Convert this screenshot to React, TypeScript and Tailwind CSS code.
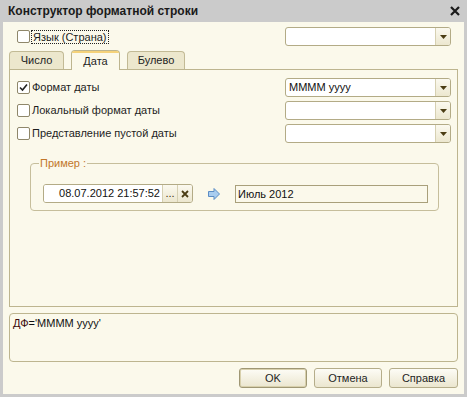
import React from 'react';

const cream = 'bg-[#fbf9eb]';

function Checkbox({ checked = false }: { checked?: boolean }) {
  return (
    <div className="w-[13px] h-[13px] shrink-0 rounded-[2px] border border-[#8f876a] bg-white flex items-center justify-center">
      {checked && (
        <svg width="9" height="9" viewBox="0 0 9 9">
          <path d="M1 4.5 L3.5 7 L8 1.5" fill="none" stroke="#222" strokeWidth="1.6" />
        </svg>
      )}
    </div>
  );
}

function Dropdown({ value = '' }: { value?: string }) {
  return (
    <div className="w-[166px] h-[19px] shrink-0 flex rounded-[3px] border border-[#b3ab86] bg-white overflow-hidden">
      <div className="flex-1 px-[3px] leading-[17px] text-[#111]">{value}</div>
      <div className="w-[15px] border-l border-[#d6d0b2] bg-gradient-to-b from-[#fbf9ef] to-[#ece7cf] flex items-center justify-center">
        <svg width="7" height="4" viewBox="0 0 7 4">
          <path d="M0 0 H7 L3.5 4 Z" fill="#4b3d14" />
        </svg>
      </div>
    </div>
  );
}

function OptionRow({ label, checked, value }: { label: string; checked?: boolean; value?: string }) {
  return (
    <div className="h-[19px] flex items-center justify-between">
      <div className="flex items-center gap-[2px]">
        <Checkbox checked={checked} />
        <span className="text-[#1e1e1e]">{label}</span>
      </div>
      <Dropdown value={value} />
    </div>
  );
}

function Tab({ label, active, width }: { label: string; active?: boolean; width: string }) {
  if (active) {
    return (
      <div className={`relative z-10 -mb-px h-[20px] ${width} rounded-t-[4px] border border-b-0 border-[#bdb58f] ${cream} flex flex-col`}>
        <div className="h-[2px] rounded-t-[3px] bg-[#f5d27a]" />
        <div className="flex-1 text-center leading-[16px] text-[#1e1e1e]">{label}</div>
      </div>
    );
  }
  return (
    <div className={`h-[18px] ${width} rounded-t-[4px] border border-b-0 border-[#c2ba95] bg-[#ece7cd] text-center leading-[17px] text-[#1e1e1e]`}>
      {label}
    </div>
  );
}

function Button({ label, primary, width }: { label: string; primary?: boolean; width: string }) {
  return (
    <div
      className={`${width} h-[20px] rounded-[3px] border ${primary ? 'border-[#9f9774] shadow-[inset_0_0_0_1px_#d8d0ac]' : 'border-[#b5ad8a]'} bg-gradient-to-b from-[#fdfcf6] to-[#ebe6cf] text-center leading-[18px] text-[#1e1e1e]`}
    >
      {label}
    </div>
  );
}

export default function App() {
  return (
    <div className="w-[467px] h-[397px] bg-[#cbcbcb] flex flex-col font-['Liberation_Sans',Arial,sans-serif] text-[11px]">
      {/* Title bar */}
      <div className="h-[22px] shrink-0 flex items-center justify-between pl-[8px] pr-[7px]">
        <span className="text-[12px] font-bold text-[#1a1a1a]">Конструктор форматной строки</span>
        <svg width="10" height="10" viewBox="0 0 10 10">
          <path d="M1 1 L9 9 M9 1 L1 9" stroke="#1a1a1a" strokeWidth="2.2" />
        </svg>
      </div>

      {/* Body */}
      <div className={`flex-1 mx-[3px] mb-[3px] ${cream} flex flex-col pt-[5px] px-[6px] pb-[6px]`}>
        {/* Language row */}
        <div className="h-[19px] flex items-center justify-between pl-[8px] pr-[7px]">
          <div className="flex items-center gap-[1px]">
            <Checkbox />
            <span className="border border-dotted border-[#222] px-[1px] leading-[12px] text-[#1e1e1e]">Язык (Страна)</span>
          </div>
          <Dropdown />
        </div>

        {/* Tabs */}
        <div className="mt-[4px] h-[19px] flex items-end gap-[7px]">
          <Tab label="Число" width="w-[55px]" />
          <Tab label="Дата" active width="w-[49px]" />
          <Tab label="Булево" width="w-[58px]" />
        </div>

        {/* Tab panel */}
        <div className="h-[238px] shrink-0 border border-[#bdb58f] flex flex-col pt-[8px] pl-[7px] pr-[6px] gap-[4px]">
          <OptionRow label="Формат даты" checked value="MMMM yyyy" />
          <OptionRow label="Локальный формат даты" />
          <OptionRow label="Представление пустой даты" />

          {/* Example group */}
          <div className="mt-[16px] ml-[13px] mr-[12px] h-[48px] rounded-[4px] border border-[#c6be9b] flex flex-col">
            <div className={`-mt-[8px] ml-[8px] self-start px-[1px] h-[14px] leading-[14px] ${cream} text-[#c2772a]`}>
              Пример :
            </div>
            <div className="mt-[14px] pl-[12px] flex items-center">
              <div className="w-[150px] h-[19px] flex rounded-[3px] border border-[#b3ab86] overflow-hidden">
                <div className="flex-1 bg-white text-right pr-[2px] leading-[17px] text-[#111]">08.07.2012 21:57:52</div>
                <div className="w-[15px] border-l border-[#d6d0b2] bg-gradient-to-b from-[#fbf9ef] to-[#ece7cf] text-center leading-[17px] text-[#3d3010]">
                  ...
                </div>
                <div className="w-[15px] border-l border-[#d6d0b2] bg-gradient-to-b from-[#fbf9ef] to-[#ece7cf] flex items-center justify-center">
                  <svg width="8" height="8" viewBox="0 0 8 8">
                    <path d="M1 1 L7 7 M7 1 L1 7" stroke="#4b3d14" strokeWidth="1.8" />
                  </svg>
                </div>
              </div>
              <svg className="ml-[15px]" width="12" height="12" viewBox="0 0 12 12">
                <path
                  d="M0.5 3.5 H6 V0.5 L11.5 6 L6 11.5 V8.5 H0.5 Z"
                  fill="#a9cdef"
                  stroke="#5b8cc4"
                  strokeWidth="1"
                />
              </svg>
              <div className="ml-[15px] w-[193px] h-[18px] border border-[#a9a07b] px-[2px] leading-[16px] text-[#111]">
                Июль 2012
              </div>
            </div>
          </div>
        </div>

        {/* Result text */}
        <div className="mt-[6px] h-[49px] rounded-[4px] border border-[#bdb58f] px-[3px] pt-[1px] text-[#111]">
          <span className="text-[#3a0a0a]">ДФ</span>='MMMM yyyy'
        </div>

        {/* Buttons */}
        <div className="mt-[6px] h-[20px] flex justify-end gap-[7px]">
          <Button label="OK" primary width="w-[68px]" />
          <Button label="Отмена" width="w-[68px]" />
          <Button label="Справка" width="w-[69px]" />
        </div>
      </div>
    </div>
  );
}
